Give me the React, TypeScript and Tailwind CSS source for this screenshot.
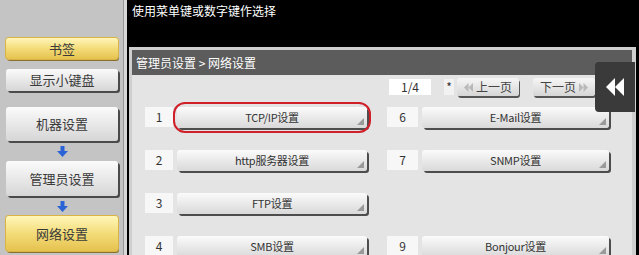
import React from 'react';

const cjk = { fontFamily: '"Noto Sans CJK SC", "Noto Sans", sans-serif' };

type Item = { no: string; label: string };

const rows: [Item, Item | null][] = [
  [{ no: '1', label: 'TCP/IP设置' }, { no: '6', label: 'E-Mail设置' }],
  [{ no: '2', label: 'http服务器设置' }, { no: '7', label: 'SNMP设置' }],
  [{ no: '3', label: 'FTP设置' }, null],
  [{ no: '4', label: 'SMB设置' }, { no: '9', label: 'Bonjour设置' }],
];

function Corner() {
  return (
    <svg className="absolute right-[3px] bottom-[3px]" width="7" height="7" viewBox="0 0 7 7">
      <polygon points="7,0 7,7 0,7" fill="#9a9a9a" />
    </svg>
  );
}

function MenuButton({ label, width }: { label: string; width: string }) {
  return (
    <div
      className={`relative ${width} h-[21px] flex items-center justify-center rounded-[3px] bg-gradient-to-b from-[#fbfbfb] to-[#d9d9d9] shadow-[2px_2px_0_#4d4d4d] text-[11px] leading-none text-[#333] tracking-tight`}
    >
      {label}
      <Corner />
    </div>
  );
}

function NumBox({ no, width }: { no: string; width: string }) {
  return (
    <div className={`${width} h-[20px] bg-[#f7f7f7] flex items-center justify-center text-[12px] leading-none text-[#333]`}>
      {no}
    </div>
  );
}

function SideButton({ label, yellow, h }: { label: string; yellow?: boolean; h: string }) {
  return (
    <div
      className={`${h} w-full shrink-0 flex items-center justify-center rounded-[3px] text-[13px] text-[#3a3a3a] ${
        yellow
          ? 'bg-gradient-to-b from-[#fff6b8] via-[#f3dc78] to-[#e6c24e] shadow-[0_0_0_1px_#d9b445,1px_2px_0_#8a7030]'
          : 'bg-gradient-to-b from-[#fbfbfb] to-[#d6d6d6] shadow-[2px_2px_0_#4a4a4a]'
      }`}
    >
      {label}
    </div>
  );
}

function DownArrow() {
  return (
    <svg width="11" height="11" viewBox="0 0 11 11">
      <rect x="3.5" y="0" width="4" height="5" fill="#2c64d6" />
      <polygon points="0,5 11,5 5.5,11" fill="#2c64d6" />
    </svg>
  );
}

function DoubleArrow({ dir, color, size }: { dir: 'left' | 'right'; color: string; size: number }) {
  const pts =
    dir === 'left'
      ? ['6,0 6,12 0,6', '12,0 12,12 6,6']
      : ['0,0 0,12 6,6', '6,0 6,12 12,6'];
  return (
    <svg width={size} height={size} viewBox="0 0 12 12">
      <polygon points={pts[0]} fill={color} />
      <polygon points={pts[1]} fill={color} />
    </svg>
  );
}

export default function App() {
  return (
    <div className="w-[639px] h-[255px] overflow-hidden flex bg-black" style={cjk}>
      {/* sidebar */}
      <div className="w-[127px] h-full bg-[#c4c4c4] border-r-[3px] border-[#d8d8d8] shadow-[inset_-1px_0_0_#999] px-[6px] pt-[38px] flex flex-col shrink-0">
        <SideButton label="书签" yellow h="h-[21px]" />
        <div className="h-[10px] shrink-0" />
        <SideButton label="显示小键盘" h="h-[22px]" />
        <div className="h-[16px] shrink-0" />
        <SideButton label="机器设置" h="h-[34px]" />
        <div className="h-[20px] shrink-0 flex items-center justify-center">
          <DownArrow />
        </div>
        <SideButton label="管理员设置" h="h-[35px]" />
        <div className="h-[20px] shrink-0 flex items-center justify-center">
          <DownArrow />
        </div>
        <SideButton label="网络设置" yellow h="h-[35px]" />
      </div>

      {/* main */}
      <div className="flex-1 min-h-0 flex flex-col pl-[2px]">
        <div className="h-[47px] shrink-0 pl-[3px] pt-[2px] text-white text-[12px] leading-[18px]">
          使用菜单键或数字键作选择
        </div>
        <div className="relative flex-1 min-h-0 flex flex-col mr-[3px] border-t-[3px] border-l-[3px] border-r-[4px] border-[#cfcfcf] bg-[#e4e4e4]">
          <div className="h-[25px] shrink-0 bg-[#5c5c5c] text-white text-[12px] flex items-center pl-[4px]">
            管理员设置 &gt; 网络设置
          </div>
          <div className="flex-1 min-h-0 overflow-hidden flex flex-col pl-[13px]">
            {/* pagination */}
            <div className="mt-[3px] h-[18px] shrink-0 flex items-center pl-[244px]">
              <div className="w-[42px] h-[16px] bg-white flex items-center justify-center text-[12px] text-[#333]">
                1/4
              </div>
              <div className="ml-[13px] w-[10px] h-[16px] bg-[#f2f2f2] flex items-center justify-center text-[12px] text-[#333]">
                *
              </div>
              <div className="ml-[3px] w-[62px] h-[18px] rounded-[3px] bg-gradient-to-b from-[#f6f6f6] to-[#d6d6d6] shadow-[1px_2px_0_#555] flex items-center justify-center gap-[3px] text-[12px] text-[#444]">
                <DoubleArrow dir="left" color="#b9b9b9" size={9} />
                上一页
              </div>
              <div className="ml-[14px] w-[62px] h-[18px] rounded-[3px] bg-gradient-to-b from-[#f6f6f6] to-[#d6d6d6] shadow-[1px_2px_0_#555] flex items-center justify-center gap-[3px] text-[12px] text-[#444]">
                下一页
                <DoubleArrow dir="right" color="#b9b9b9" size={9} />
              </div>
            </div>

            {/* rows */}
            <div className="mt-[10px] flex flex-col gap-[21px]">
              {rows.map(([a, b]) => (
                <div key={a.no} className="flex items-center h-[22px] shrink-0">
                  <div className="relative flex items-center gap-[4px] w-[242px]">
                    <NumBox no={a.no} width="w-[28px]" />
                    <MenuButton label={a.label} width="w-[190px]" />
                    {a.no === '1' && (
                      <div className="absolute left-[28px] top-[-5px] w-[198px] h-[31px] rounded-[12px] border-[2px] border-[#d0202a]" />
                    )}
                  </div>
                  {b && (
                    <div className="flex items-center gap-[4px]">
                      <NumBox no={b.no} width="w-[31px]" />
                      <MenuButton label={b.label} width="w-[187px]" />
                    </div>
                  )}
                </div>
              ))}
            </div>
          </div>

          {/* floating back button */}
          <div className="absolute right-[-3px] top-[12px] w-[40px] h-[50px] bg-[#3a3a3a] rounded-l-[4px] flex items-center justify-center">
            <DoubleArrow dir="left" color="#ffffff" size={18} />
          </div>
        </div>
      </div>
    </div>
  );
}
